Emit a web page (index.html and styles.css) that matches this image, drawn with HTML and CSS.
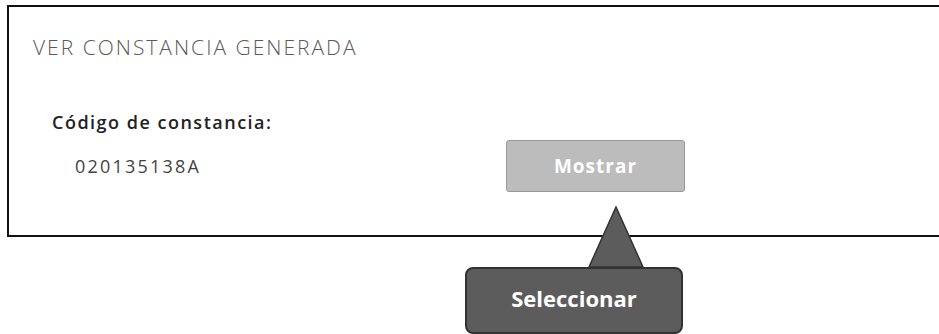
FILE: index.html
```html
<!DOCTYPE html>
<html lang="es">
<head>
  <meta charset="UTF-8" />
  <title>Ver constancia generada</title>
  <link rel="stylesheet" href="styles.css">
</head>
<body>
  <div class="panel">
    <h2 class="panel-title">VER CONSTANCIA GENERADA</h2>
    <div class="field">
      <p class="field-label">Código de constancia:</p>
      <div class="field-row">
        <span class="field-value">020135138A</span>
        <button class="show-button" type="button">Mostrar</button>
      </div>
    </div>
  </div>

  <div class="callout">
    <svg class="callout-arrow" width="58" height="62" viewBox="0 0 58 62">
      <polygon points="29,1 56,61 2,61" fill="#5c5c5c" stroke="#333" stroke-width="1.5" />
    </svg>
    <div class="callout-box">Seleccionar</div>
  </div>
</body>
</html>
```

FILE: styles.css
```css
html {
  overflow: hidden;
}
body {
  margin: 0;
  min-height: 334px;
  background: #fff;
  font-family: "Open Sans", Arial, sans-serif;
  position: relative;
}
.panel {
  box-sizing: border-box;
  height: 232px;
  margin: 5px -20px 0 7px;
  padding: 26px 0 0 24px;
  border: 2px solid #111;
}
.panel-title {
  margin: 0;
  font-size: 21px;
  font-weight: 300;
  line-height: 28px;
  letter-spacing: 2px;
  color: #5a5a5a;
}
.field {
  margin: 49px 0 0 19px;
}
.field-label {
  margin: 0;
  font-size: 18px;
  font-weight: 600;
  line-height: 24px;
  letter-spacing: 1.5px;
  color: #222;
}
.field-row {
  display: grid;
  grid-template-columns: 431px 179px;
  align-items: center;
  margin: 6px 0 0 23px;
}
.field-value {
  font-size: 18px;
  letter-spacing: 2.2px;
  color: #444;
}
.show-button {
  height: 52px;
  border: 1px solid #9a9a9a;
  border-radius: 3px;
  background: #bcbcbc;
  color: #fff;
  font-family: "Open Sans", Arial, sans-serif;
  font-size: 19px;
  font-weight: 700;
  letter-spacing: 1px;
}
.callout {
  position: absolute;
  left: 465px;
  top: 206px;
  width: 218px;
}
.callout-arrow {
  display: block;
  margin-left: 122px;
}
.callout-box {
  box-sizing: border-box;
  height: 67px;
  margin-top: -1px;
  border: 2px solid #333;
  border-radius: 8px;
  background: #5c5c5c;
  color: #fff;
  font-size: 22px;
  font-weight: 700;
  line-height: 58px;
  text-align: center;
}
```
